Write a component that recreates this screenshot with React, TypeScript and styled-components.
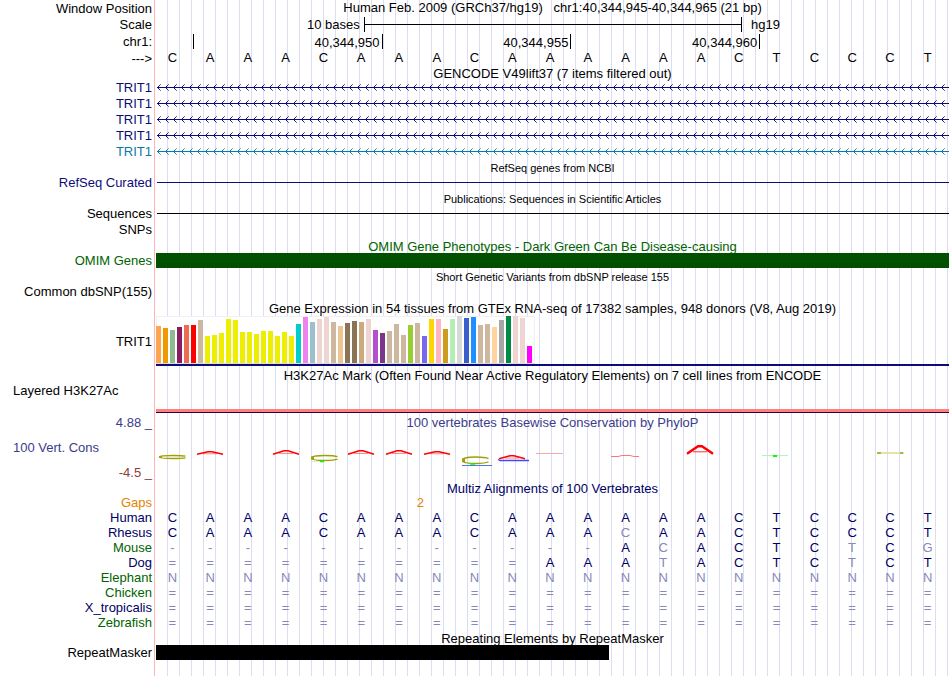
import React from "react";
import styled, { createGlobalStyle } from "styled-components";

const NAVY = "#0c0c78";
const DEEP = "#000064";
const GREEN = "#006400";
const BASES = 21;

const GlobalStyle = createGlobalStyle`
  * { box-sizing: border-box; }
  body {
    margin: 0;
    background: #fff;
    color: #000;
    font: 13px/15px "Liberation Sans", Arial, Helvetica, sans-serif;
  }
`;

const Page = styled.main`
  min-height: 100vh;
  padding-right: 1px;
  background:
    linear-gradient(#ffb4b4, #ffb4b4) 154px 0 / 1px 100% no-repeat,
    repeating-linear-gradient(90deg, #dcdcf5 0 1px, transparent 1px 12px) 167px 0 / 100% 100% no-repeat;
`;

const Row = styled.section<{ $h?: number }>`
  display: grid;
  grid-template-columns: 154px minmax(0, 1fr);
  column-gap: 2px;
  height: ${(p) => p.$h ?? 15}px;
`;

const Label = styled.div<{ $color?: string; $left?: boolean }>`
  display: flex;
  align-items: ${(p) => (p.$left ? "flex-start" : "center")};
  justify-content: ${(p) => (p.$left ? "flex-start" : "flex-end")};
  padding: ${(p) => (p.$left ? "0 0 0 13px" : "0 2px 0 0")};
  color: ${(p) => p.$color ?? "#000"};
  white-space: nowrap;
`;

const Track = styled.div`
  display: flex;
  align-items: center;
  min-width: 0;
`;

const Position = styled.h1`
  flex: 1;
  margin: 0;
  padding-bottom: 2px;
  font-size: 13px;
  font-weight: 400;
  text-align: center;
  white-space: pre;
`;

const Heading = styled.h2<{ $h?: number; $small?: boolean; $color?: string }>`
  display: flex;
  align-items: center;
  justify-content: center;
  height: ${(p) => p.$h ?? 15}px;
  margin: 0 0 0 156px;
  padding-top: 2px;
  font-size: ${(p) => (p.$small ? 11 : 13)}px;
  font-weight: 400;
  color: ${(p) => p.$color ?? "#000"};
`;

const ScaleName = styled.span`
  flex: 0 0 26.2%;
  padding-right: 4px;
  text-align: right;
`;

const ScaleBar = styled.span`
  flex: 0 0 47.7%;
  display: flex;
  align-items: center;
  height: 15px;
  border: solid #000;
  border-width: 0 1px;

  &::before {
    content: "";
    flex: 1;
    height: 1px;
    background: #000;
  }
`;

const Assembly = styled.span`
  padding-left: 9px;
`;

const BaseGrid = styled.div`
  flex: 1;
  display: grid;
  grid-template-columns: repeat(${BASES}, minmax(0, 1fr));
`;

const Tick = styled.span<{ $span: number }>`
  grid-column: span ${(p) => p.$span};
  height: 15px;
  padding: 1px 2px 0 0;
  border-right: 1px solid #000;
  text-align: right;
`;

const Base = styled.span`
  padding: 0 5px 2px 0;
  text-align: center;
`;

const ArrowLine = styled.svg`
  display: block;
  width: 100%;
  height: 15px;
`;

const Rule = styled.div<{ $color: string }>`
  flex: 1;
  height: 1px;
  margin-left: 1px;
  background: ${(p) => p.$color};
`;

const Block = styled.div<{ $color: string; $width?: string }>`
  width: ${(p) => p.$width ?? "100%"};
  height: 15px;
  background: ${(p) => p.$color};
`;

const Expression = styled.div`
  flex: 1;
  align-self: stretch;
  border-bottom: 2px solid ${NAVY};
`;

const Bars = styled.svg`
  display: block;
`;

const Signal = styled.div`
  flex: 1;
  align-self: flex-end;
  height: 4px;
  background: #ff8080;
  border-bottom: 1px solid #320032;
`;

const Limits = styled.div`
  display: flex;
  flex-direction: column;
  justify-content: space-between;
  padding: 2px 2px 0 13px;
  color: #3c3c8c;
`;

const Limit = styled.div<{ $low?: boolean }>`
  text-align: right;
  color: ${(p) => (p.$low ? "#8c3c3c" : "#3c3c8c")};
`;

const Conservation = styled.div`
  min-width: 0;
`;

const ConservationTitle = styled.h2`
  margin: 0;
  padding-top: 2px;
  font-size: 13px;
  font-weight: 400;
  text-align: center;
  color: #3c3c8c;
`;

const Logo = styled.svg`
  display: block;
  width: 100%;
  height: 50px;
`;

const Alignment = styled.table`
  display: block;
`;

const AlignBody = styled.tbody`
  display: block;
`;

const AlignRow = styled.tr`
  display: grid;
  grid-template-columns: 156px repeat(${BASES}, minmax(0, 1fr));
  height: 15px;
`;

const Species = styled.th<{ $color: string }>`
  padding: 0 4px 0 0;
  font-weight: 400;
  text-align: right;
  color: ${(p) => p.$color};
`;

const Cell = styled.td<{ $faded: boolean }>`
  padding: 0 5px 0 0;
  text-align: center;
  color: ${(p) => (p.$faded ? "#8787b9" : DEEP)};
`;

const GapSpace = styled.td`
  grid-column: span 6;
  padding: 0;
`;

const GapCount = styled.td`
  grid-column: span 2;
  padding: 0;
  text-align: center;
  color: #e68200;
`;

const HUMAN = "CAAACAAACAAAAAACTCCCT";

const GENES = [NAVY, NAVY, NAVY, NAVY, "#0c78aa"];

const ALIGNMENTS: { name: string; color: string; seq: string }[] = [
  { name: "Human", color: DEEP, seq: HUMAN },
  { name: "Rhesus", color: DEEP, seq: "CAAACAAACAAACAACTCCCT" },
  { name: "Mouse", color: GREEN, seq: "------------ACACTCTCG" },
  { name: "Dog", color: DEEP, seq: "==========AAATACTCTCT" },
  { name: "Elephant", color: GREEN, seq: "N".repeat(BASES) },
  { name: "Chicken", color: GREEN, seq: "=".repeat(BASES) },
  { name: "X_tropicalis", color: DEEP, seq: "=".repeat(BASES) },
  { name: "Zebrafish", color: GREEN, seq: "=".repeat(BASES) },
];

const Y = "#eeee00";
const TAN = "#cdb79e";
const PINK = "#eed5d2";
const TISSUES: [number, string][] = [
  [37, "#ffa54f"], [35, "#ee9a00"], [33, "#8fbc8f"], [36, "#8b1c62"], [38, "#ee6a50"], [38, "#ff0000"],
  [43, TAN], [27, Y], [28, Y], [30, Y], [44, Y], [43, Y], [31, Y], [31, Y], [29, Y], [32, Y], [32, Y],
  [27, Y], [31, Y], [27, Y], [39, "#00cdcd"], [46, "#ee82ee"], [41, "#9ac0cd"], [44, PINK], [46, PINK],
  [41, TAN], [37, "#eec591"], [40, "#8b7355"], [42, "#8b7355"], [41, "#cdaa7d"], [44, PINK],
  [33, "#b452cd"], [30, "#7a378b"], [32, TAN], [39, TAN], [28, TAN], [38, "#9acd32"], [40, TAN],
  [27, "#7a67ee"], [44, "#ffd700"], [44, "#ffb6c1"], [34, "#cd9b1d"], [44, "#b4eeb4"], [47, "#d9d9d9"],
  [45, "#3a5fcd"], [46, "#1e90ff"], [38, TAN], [39, TAN], [36, "#ffd39b"], [43, "#a6a6a6"],
  [47, "#008b45"], [47, PINK], [45, PINK], [17, "#ff00ff"],
];

/* Peaks of the conservation logo: left edge, top, height and line weight. */
const PEAKS: [number, number, number, number][] = [
  [40, 38, 4, 1.4], [116, 37, 5, 1.5], [191, 37, 5, 1.5], [229, 37, 5, 1.5], [267, 38, 4, 1.4],
  [342, 42, 4.5, 1.5], [530, 32, 10, 2.4],
];

/* Open rings of the conservation logo: left edge, top and height. */
const RINGS: [number, number, number][] = [[2, 42, 4], [154, 42, 6], [305, 43.5, 7.5]];

function Arrows({ color, id }: { color: string; id: string }) {
  return (
    <ArrowLine aria-hidden="true">
      <defs>
        <pattern id={id} width="8" height="15" patternUnits="userSpaceOnUse">
          <g fill={color} shapeRendering="crispEdges">
            <path d="M1 7h1v1h-1zM2 6h1v3h-1z" />
            <path d="M3 5h1v1h-1zM3 9h1v1h-1z" fillOpacity="0.9" />
            <path d="M4 4h1v1h-1zM4 10h1v1h-1z" fillOpacity="0.6" />
          </g>
        </pattern>
      </defs>
      <rect width="100%" height="15" fill={`url(#${id})`} />
      <rect x="1" y="7" width="100%" height="1" fill={color} />
    </ArrowLine>
  );
}

function ExpressionChart() {
  return (
    <Bars width="379" height="48" role="img" aria-label="Expression by tissue" shapeRendering="crispEdges">
      <rect width="379" height="48" fill="#fff" />
      <path d="M0.5 48V0.5H378.5V48" fill="none" stroke="#f0f0f0" />
      <path d="M0 47.5H379" stroke="#dcdcdc" />
      {TISSUES.map(([h, color], i) => (
        <rect key={i} x={i * 7} y={47 - h} width="5" height={h} fill={color} />
      ))}
    </Bars>
  );
}

function ConservationLogo() {
  return (
    <Logo viewBox="0 17 793 50" preserveAspectRatio="none" role="img" aria-label="Conservation score per base">
      <g fill="none">
        {PEAKS.map(([x, y, h, w]) => (
          <g key={x} stroke="#ff0000">
            <path
              d={`M${x + 1} ${y + h - w / 2}L${x + 12} ${y + w / 2}H${x + 16}L${x + 27} ${y + h - w / 2}`}
              strokeWidth={w}
            />
            <path d={`M${x + 7} ${y + h * 0.68}H${x + 21}`} strokeWidth={w / 3} />
          </g>
        ))}
        {RINGS.map(([x, y, h]) => (
          <g key={x} stroke="#a0a000">
            <path
              d={`M${x + 27.5} ${y + h * 0.28}Q${x + 24} ${y + 0.5} ${x + 15} ${y + 0.5}Q${x + 1.5} ${y + 0.5} ${x + 1.5} ${y + h / 2}Q${x + 1.5} ${y + h - 0.5} ${x + 15} ${y + h - 0.5}Q${x + 24} ${y + h - 0.5} ${x + 27.5} ${y + h * 0.7}`}
              strokeWidth="1.3"
            />
            <path d={`M${x + 2.5} ${y + h * 0.25}V${y + h * 0.75}`} strokeWidth="3" />
          </g>
        ))}
        <path d="M155 48.5H168" stroke="#b4f0b4" strokeWidth="0.6" />
        <path d="M164 48.5H168M314 51H319" stroke="#00ff00" strokeWidth="1.4" />
        <path d="M306 52.5H336" stroke="#5078e6" />
        <path d="M342 46.5L344 47.5H373" stroke="#4646ff" strokeWidth="1.3" />
        <path d="M380 40.5H407" stroke="#f0a0a0" strokeWidth="0.9" />
        <path d="M455 43.5H462L466 42.5H474L478 43.5H483" stroke="#ff6464" strokeWidth="0.9" />
        <path d="M606 42.5H632" stroke="#b4f5b4" />
        <path d="M617 43H621" stroke="#00ff00" strokeWidth="2" />
        <path d="M721 40H748" stroke="#dcdc96" strokeWidth="1.6" />
        <path d="M721 40H725M744 40H747" stroke="#b4b43c" strokeWidth="1.8" />
      </g>
    </Logo>
  );
}

export default function App() {
  return (
    <>
      <GlobalStyle />
      <Page>
        <Row $h={16}>
          <Label>Window Position</Label>
          <Track>
            <Position>{"Human Feb. 2009 (GRCh37/hg19)   chr1:40,344,945-40,344,965 (21 bp)"}</Position>
          </Track>
        </Row>
        <Row $h={17}>
          <Label>Scale</Label>
          <Track>
            <ScaleName>10 bases</ScaleName>
            <ScaleBar />
            <Assembly>hg19</Assembly>
          </Track>
        </Row>
        <Row $h={17}>
          <Label>chr1:</Label>
          <Track>
            <BaseGrid>
              <Tick $span={1} />
              <Tick $span={5}>40,344,950</Tick>
              <Tick $span={5}>40,344,955</Tick>
              <Tick $span={5}>40,344,960</Tick>
            </BaseGrid>
          </Track>
        </Row>
        <Row>
          <Label>---&gt;</Label>
          <Track>
            <BaseGrid>
              {HUMAN.split("").map((b, i) => (
                <Base key={i}>{b}</Base>
              ))}
            </BaseGrid>
          </Track>
        </Row>

        <Heading $h={14}>GENCODE V49lift37 (7 items filtered out)</Heading>
        {GENES.map((color, i) => (
          <Row key={i} $h={16}>
            <Label $color={color}>TRIT1</Label>
            <Track>
              <Arrows color={color} id={`arrow-${i}`} />
            </Track>
          </Row>
        ))}

        <Heading $small $h={16}>RefSeq genes from NCBI</Heading>
        <Row>
          <Label $color={NAVY}>RefSeq Curated</Label>
          <Track>
            <Rule $color={NAVY} />
          </Track>
        </Row>

        <Heading $small $h={16}>Publications: Sequences in Scientific Articles</Heading>
        <Row>
          <Label>Sequences</Label>
          <Track>
            <Rule $color="#000" />
          </Track>
        </Row>
        <Row $h={17}>
          <Label>SNPs</Label>
        </Row>

        <Heading $color={GREEN}>OMIM Gene Phenotypes - Dark Green Can Be Disease-causing</Heading>
        <Row>
          <Label $color={GREEN}>OMIM Genes</Label>
          <Track>
            <Block $color="#005000" />
          </Track>
        </Row>

        <Heading $small $h={16}>Short Genetic Variants from dbSNP release 155</Heading>
        <Row>
          <Label>Common dbSNP(155)</Label>
        </Row>

        <Heading $h={17}>
          Gene Expression in 54 tissues from GTEx RNA-seq of 17382 samples, 948 donors (V8, Aug 2019)
        </Heading>
        <Row $h={50}>
          <Label>TRIT1</Label>
          <Track>
            <Expression>
              <ExpressionChart />
            </Expression>
          </Track>
        </Row>

        <Heading $h={17}>
          H3K27Ac Mark (Often Found Near Active Regulatory Elements) on 7 cell lines from ENCODE
        </Heading>
        <Row $h={30}>
          <Label $left>Layered H3K27Ac</Label>
          <Track>
            <Signal />
          </Track>
        </Row>

        <Row $h={67}>
          <Limits>
            <Limit>4.88 _</Limit>
            <div>100 Vert. Cons</div>
            <Limit $low>-4.5 _</Limit>
          </Limits>
          <Conservation>
            <ConservationTitle>100 vertebrates Basewise Conservation by PhyloP</ConservationTitle>
            <ConservationLogo />
          </Conservation>
        </Row>

        <Heading $color={DEEP}>Multiz Alignments of 100 Vertebrates</Heading>
        <Alignment>
          <AlignBody>
            <AlignRow>
              <Species scope="row" $color="#e68200">Gaps</Species>
              <GapSpace />
              <GapCount>2</GapCount>
            </AlignRow>
            {ALIGNMENTS.map(({ name, color, seq }) => (
              <AlignRow key={name}>
                <Species scope="row" $color={color}>{name}</Species>
                {seq.split("").map((b, i) => (
                  <Cell key={i} $faded={b !== HUMAN[i]}>{b}</Cell>
                ))}
              </AlignRow>
            ))}
          </AlignBody>
        </Alignment>

        <Heading>Repeating Elements by RepeatMasker</Heading>
        <Row>
          <Label>RepeatMasker</Label>
          <Track>
            <Block $color="#000" $width="57.14%" />
          </Track>
        </Row>
      </Page>
    </>
  );
}
